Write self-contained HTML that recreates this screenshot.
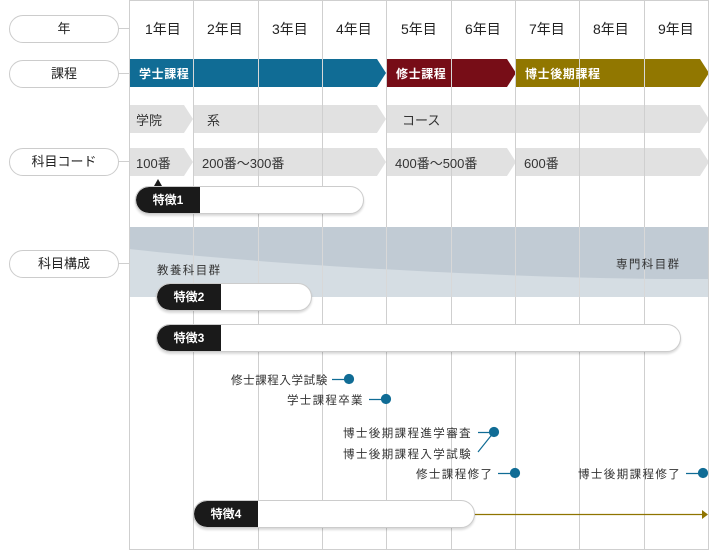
<!DOCTYPE html>
<html><head><meta charset="utf-8"><style>
*{margin:0;padding:0;box-sizing:border-box}
body{width:710px;height:551px;background:#fff;position:relative;overflow:hidden;font-family:"Liberation Sans","Noto Sans CJK JP",sans-serif;color:#222}
.a{position:absolute;white-space:nowrap}
.pill{position:absolute;left:9px;width:110px;height:28px;border:1px solid #ccc;border-radius:14px;font-size:13px;text-align:center;line-height:26px;background:#fff}
.t{font-size:11.5px;color:#333;letter-spacing:1.4px}
.g{font-size:13px;color:#333}
.feat{position:absolute;height:28px;border:1px solid #ccc;border-radius:14px;background:#fff;box-shadow:0 2px 2px rgba(0,0,0,.15);overflow:hidden}
.feat b{display:block;height:100%;width:64px;background:#1a1a1a;color:#fff;font-size:12px;line-height:26px;text-align:center;border-radius:14px 0 0 14px}
</style></head><body>
<svg class="a" style="left:0;top:0" width="710" height="551">
<rect x="129" y="227" width="580" height="70" fill="#d5dde3"/>
<path d="M129 227H709V279C560 280 300 268 129 249Z" fill="#c1cbd4"/>
<polygon points="129,59 377,59 386,73 377,87 129,87" fill="#106c95"/>
<polygon points="386,59 507,59 516,73 507,87 386,87" fill="#770d17"/>
<polygon points="516,59 700,59 709,73 700,87 516,87" fill="#917700"/>
<g fill="#e1e1e1">
<polygon points="129,105 184,105 193,119 184,133 129,133"/>
<polygon points="194,105 377,105 386,119 377,133 194,133"/>
<polygon points="387,105 700,105 709,119 700,133 387,133"/>
<polygon points="129,148 184,148 193,162 184,176 129,176"/>
<polygon points="194,148 377,148 386,162 377,176 194,176"/>
<polygon points="387,148 507,148 516,162 507,176 387,176"/>
<polygon points="516,148 700,148 709,162 700,176 516,176"/>
</g>
<polygon points="154,186 158,179 162,186" fill="#1a1a1a"/>
<g stroke="#cfcfcf" stroke-width="1" fill="none">
<path d="M129.5 0V549.5H709M193.5 0V549M258.5 0V549M322.5 0V549M386.5 0V549M451.5 0V549M515.5 0V549M579.5 0V549M644.5 0V549M708.5 0V549M129 0.5H709"/>
<path d="M118 28.5H129M118 73.5H129M118 161.5H129M118 263.5H129"/>
</g>
<g stroke="rgba(255,255,255,.2)"><path d="M193.5 59V87M258.5 59V87M322.5 59V87M451.5 59V87M579.5 59V87M644.5 59V87M193.5 227V297M258.5 227V297M322.5 227V297M386.5 227V297M451.5 227V297M515.5 227V297M579.5 227V297M644.5 227V297"/></g>
<g stroke="#106c95" stroke-width="1.2" fill="#106c95">
<path d="M332 379.5H349M369 399.5H386M478 432.5H494M494 432L478 452M498 473.5H515M686 473.5H703" fill="none"/>
<circle cx="349" cy="379" r="4.5"/><circle cx="386" cy="399" r="4.5"/><circle cx="494" cy="432" r="4.5"/><circle cx="515" cy="473" r="4.5"/><circle cx="703" cy="473" r="4.5"/>
</g>
<path d="M474 514.5H703" stroke="#8f7400" stroke-width="1.2"/>
<polygon points="702,510 708,514.5 702,519" fill="#8f7400"/>
</svg>
<div class="pill" style="top:15px">年</div>
<div class="pill" style="top:60px">課程</div>
<div class="pill" style="top:148px">科目コード</div>
<div class="pill" style="top:250px">科目構成</div>
<div class="a" style="top:19px;left:145px;font-size:14px">1年目</div>
<div class="a" style="top:19px;left:207px;font-size:14px">2年目</div>
<div class="a" style="top:19px;left:272px;font-size:14px">3年目</div>
<div class="a" style="top:19px;left:336px;font-size:14px">4年目</div>
<div class="a" style="top:19px;left:401px;font-size:14px">5年目</div>
<div class="a" style="top:19px;left:465px;font-size:14px">6年目</div>
<div class="a" style="top:19px;left:529px;font-size:14px">7年目</div>
<div class="a" style="top:19px;left:593px;font-size:14px">8年目</div>
<div class="a" style="top:19px;left:658px;font-size:14px">9年目</div>
<div class="a" style="top:65px;left:139px;font-size:12px;color:#fff;font-weight:bold;letter-spacing:.6px">学士課程</div>
<div class="a" style="top:65px;left:396px;font-size:12px;color:#fff;font-weight:bold;letter-spacing:.6px">修士課程</div>
<div class="a" style="top:65px;left:525px;font-size:12px;color:#fff;font-weight:bold;letter-spacing:.6px">博士後期課程</div>
<div class="a g" style="top:110px;left:136px">学院</div>
<div class="a g" style="top:110px;left:207px">系</div>
<div class="a g" style="top:110px;left:402px">コース</div>
<div class="a g" style="top:153px;left:136px">100番</div>
<div class="a g" style="top:153px;left:202px">200番～300番</div>
<div class="a g" style="top:153px;left:395px">400番～500番</div>
<div class="a g" style="top:153px;left:524px">600番</div>
<div class="a t" style="top:256px;left:616px">専門科目群</div>
<div class="a t" style="top:262px;left:157px">教養科目群</div>
<div class="feat" style="left:135px;top:186px;width:229px"><b>特徴1</b></div>
<div class="feat" style="left:156px;top:283px;width:156px"><b>特徴2</b></div>
<div class="feat" style="left:156px;top:324px;width:525px"><b>特徴3</b></div>
<div class="feat" style="left:193px;top:500px;width:282px"><b>特徴4</b></div>
<div class="a t" style="top:372px;left:231px;letter-spacing:.6px">修士課程入学試験</div>
<div class="a t" style="top:392px;left:287px;letter-spacing:1.3px">学士課程卒業</div>
<div class="a t" style="top:425px;left:343px">博士後期課程進学審査</div>
<div class="a t" style="top:446px;left:343px">博士後期課程入学試験</div>
<div class="a t" style="top:466px;left:416px">修士課程修了</div>
<div class="a t" style="top:466px;left:578px">博士後期課程修了</div>
</body></html>
